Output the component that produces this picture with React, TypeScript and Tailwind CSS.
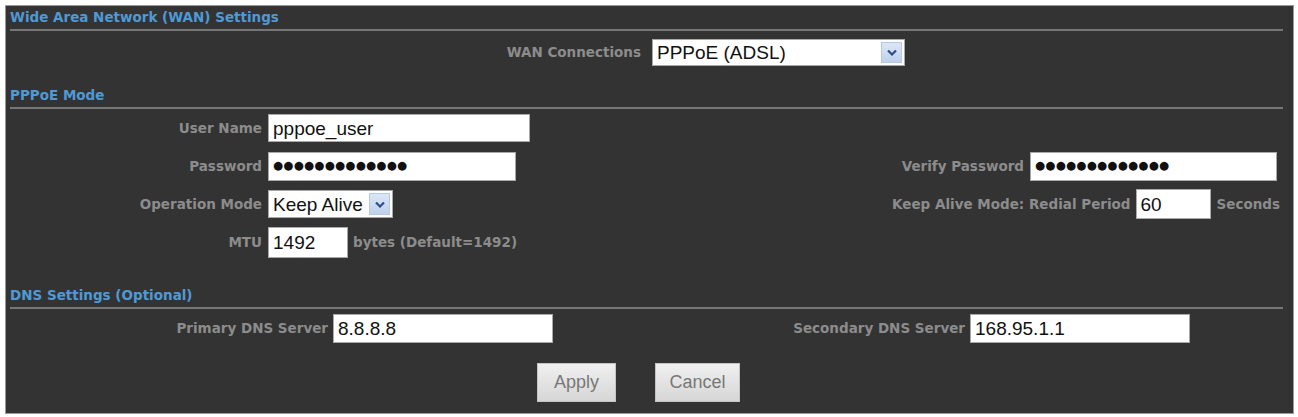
import type { ReactNode } from 'react';

// WAN settings form of a router admin page

const LABEL = "font-['DejaVu_Sans',sans-serif] text-[13.5px] font-bold text-[#8c8c8c] whitespace-nowrap";
const FIELD = "flex items-center bg-white border border-[#a9a9a9] pl-[4px] font-['Liberation_Sans',Arial,sans-serif] text-[19px] text-[#111] leading-none";

function SectionTitle({ children, className = '' }: { children: ReactNode; className?: string }) {
  return (
    <div className={className}>
      <div className="flex h-[23px] items-center pl-[4px] font-['DejaVu_Sans',sans-serif] text-[13.5px] font-bold text-[#4f9ad6]">
        {children}
      </div>
      <div className="ml-[4px] mr-[10px] h-[2px] bg-[#767676]" />
    </div>
  );
}

function Field({ value, width, height = 28 }: { value: ReactNode; width: string; height?: number }) {
  return (
    <div className={`${FIELD} ${width}`} style={{ height }}>
      {value}
    </div>
  );
}

function Select({ value, width, height }: { value: string; width: string; height: number }) {
  return (
    <div className={`${FIELD} ${width} justify-between pr-[2px]`} style={{ height }}>
      <span>{value}</span>
      <span className="flex h-[calc(100%-4px)] w-[21px] items-center justify-center border border-[#b6c8e4] bg-gradient-to-b from-[#dce7f7] to-[#bfd1ec]">
        <svg width="10" height="7" viewBox="0 0 10 7">
          <path d="M1 1.5 L5 5.5 L9 1.5" fill="none" stroke="#2f4f8a" strokeWidth="2.2" />
        </svg>
      </span>
    </div>
  );
}

const dots = '●●●●●●●●●●●●●';

function Password({ width }: { width: string }) {
  return (
    <div className={`${FIELD} ${width}`} style={{ height: 29 }}>
      <span className="font-['DejaVu_Sans',sans-serif] text-[11.5px] tracking-[0.3px]">{dots}</span>
    </div>
  );
}

export default function App() {
  return (
    <div className="h-[417px] w-[1298px] bg-white pl-[6px] pt-[6px]">
      <div className="flex h-[407px] w-[1287px] flex-col bg-[#333333] outline outline-1 outline-[#9a9a9a]">
        <SectionTitle>Wide Area Network (WAN) Settings</SectionTitle>

        {/* connection type */}
        <div className="mt-[8px] flex items-center">
          <div className={`${LABEL} w-[635px] text-right`}>WAN Connections</div>
          <div className="ml-[11px]">
            <Select value="PPPoE (ADSL)" width="w-[253px]" height={27} />
          </div>
        </div>

        <SectionTitle className="mt-[18px]">PPPoE Mode</SectionTitle>

        <div className="flex h-[38px] items-center">
          <div className={`${LABEL} w-[256px] text-right`}>User Name</div>
          <div className="ml-[6px]">
            <Field value="pppoe_user" width="w-[262px]" />
          </div>
        </div>

        <div className="flex h-[38px] items-center justify-between pr-[16px]">
          <div className="flex items-center">
            <div className={`${LABEL} w-[256px] text-right`}>Password</div>
            <div className="ml-[6px]">
              <Password width="w-[248px]" />
            </div>
          </div>
          <div className="flex items-center">
            <div className={LABEL}>Verify Password</div>
            <div className="ml-[6px]">
              <Password width="w-[247px]" />
            </div>
          </div>
        </div>

        <div className="flex h-[38px] items-center justify-between pr-[13px]">
          <div className="flex items-center">
            <div className={`${LABEL} w-[256px] text-right`}>Operation Mode</div>
            <div className="ml-[6px]">
              <Select value="Keep Alive" width="w-[125px]" height={28} />
            </div>
          </div>
          <div className="flex items-center">
            <div className={LABEL}>Keep Alive Mode: Redial Period</div>
            <div className="ml-[5px]">
              <Field value="60" width="w-[75px]" height={30} />
            </div>
            <div className={`${LABEL} ml-[6px]`}>Seconds</div>
          </div>
        </div>

        <div className="flex h-[38px] items-center">
          <div className={`${LABEL} w-[256px] text-right`}>MTU</div>
          <div className="ml-[6px]">
            <Field value="1492" width="w-[80px]" height={31} />
          </div>
          <div className={`${LABEL} ml-[5px]`}>bytes (Default=1492)</div>
        </div>

        <SectionTitle className="mt-[23px]">DNS Settings (Optional)</SectionTitle>

        <div className="flex h-[38px] items-center">
          <div className="flex w-[643px] items-center">
            <div className={`${LABEL} w-[322px] text-right`}>Primary DNS Server</div>
            <div className="ml-[5px]">
              <Field value="8.8.8.8" width="w-[220px]" height={29} />
            </div>
          </div>
          <div className="flex items-center">
            <div className={`${LABEL} w-[316px] text-right`}>Secondary DNS Server</div>
            <div className="ml-[5px]">
              <Field value="168.95.1.1" width="w-[220px]" height={29} />
            </div>
          </div>
        </div>

        {/* actions */}
        <div className="mt-[16px] flex justify-center gap-[39px] pr-[22px]">
          <button className="h-[39px] w-[79px] border border-[#c4c4c4] bg-gradient-to-b from-[#f0f0f0] to-[#d6d6d6] font-['Liberation_Sans',Arial,sans-serif] text-[18px] text-[#777]">
            Apply
          </button>
          <button className="h-[39px] w-[85px] border border-[#c4c4c4] bg-gradient-to-b from-[#f0f0f0] to-[#d6d6d6] font-['Liberation_Sans',Arial,sans-serif] text-[18px] text-[#777]">
            Cancel
          </button>
        </div>
      </div>
    </div>
  );
}
